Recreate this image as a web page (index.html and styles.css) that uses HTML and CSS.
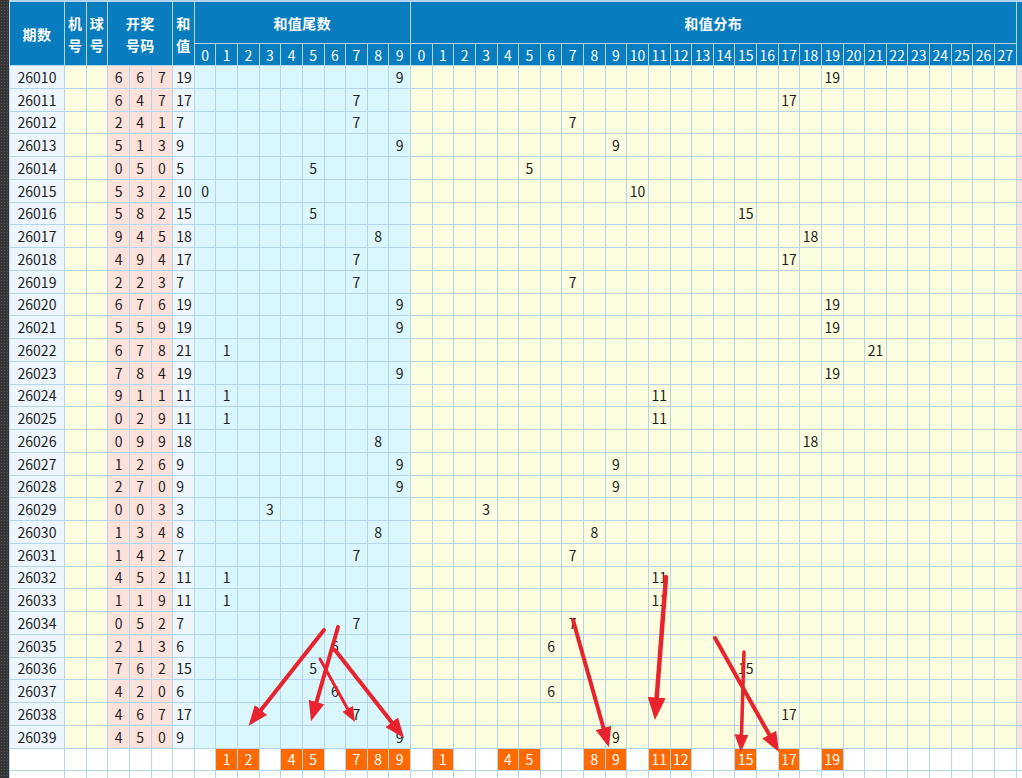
FILE: index.html
```html
<!DOCTYPE html>
<html lang="zh">
<head>
<meta charset="utf-8">
<title>和值走势</title>
<link rel="stylesheet" href="styles.css">
</head>
<body>
<div class="page">
  <div class="strip"></div>
  <div class="view">
    <div class="board" id="board">
      <div class="hd">
        <span class="h rs2">期数</span>
        <span class="h rs2 tall">机<br>号</span>
        <span class="h rs2 tall">球<br>号</span>
        <span class="h rs2 cs3 tall">开奖<br>号码</span>
        <span class="h rs2 tall">和<br>值</span>
        <span class="h cs10">和值尾数</span>
        <span class="h cs28">和值分布</span>
        <span class="h rs2"></span>
        <span class="n">0</span><span class="n">1</span><span class="n">2</span><span class="n">3</span><span class="n">4</span><span class="n">5</span><span class="n">6</span><span class="n">7</span><span class="n">8</span><span class="n">9</span>
        <span class="n">0</span><span class="n">1</span><span class="n">2</span><span class="n">3</span><span class="n">4</span><span class="n">5</span><span class="n">6</span><span class="n">7</span><span class="n">8</span><span class="n">9</span><span class="n">10</span><span class="n">11</span><span class="n">12</span><span class="n">13</span><span class="n">14</span><span class="n">15</span><span class="n">16</span><span class="n">17</span><span class="n">18</span><span class="n">19</span><span class="n">20</span><span class="n">21</span><span class="n">22</span><span class="n">23</span><span class="n">24</span><span class="n">25</span><span class="n">26</span><span class="n">27</span>
      </div>
    </div>
  </div>
  <svg class="arrows" width="1022" height="778" viewBox="0 0 1022 778" xmlns="http://www.w3.org/2000/svg">
    <defs>
      <marker id="ah" markerWidth="5" markerHeight="4" refX="0" refY="2" orient="auto" markerUnits="strokeWidth">
        <path d="M0,0 L5,2 L0,4 z" fill="#e8232d"/>
      </marker>
    </defs>
    <g stroke="#e8232d" stroke-linecap="round" fill="none" marker-end="url(#ah)">
      <line x1="324" y1="630" x2="261" y2="710" stroke-width="4"/>
      <line x1="338" y1="627" x2="316.5" y2="702" stroke-width="4"/>
      <line x1="320" y1="659" x2="347.7" y2="709" stroke-width="3"/>
      <line x1="335" y1="650" x2="391.7" y2="722.3" stroke-width="4"/>
      <line x1="573" y1="620" x2="603.5" y2="728" stroke-width="4"/>
      <line x1="666" y1="577" x2="656.7" y2="697.6" stroke-width="4.5"/>
      <line x1="715" y1="638" x2="769.2" y2="734.6" stroke-width="4"/>
      <line x1="744" y1="652" x2="741.5" y2="734.5" stroke-width="3.5"/>
    </g>
  </svg>
</div>
<script src="script.js"></script>
</body>
</html>
```

FILE: styles.css
```css
html, body {
  margin: 0;
  padding: 0;
  background: #ffffff;
}

body {
  font-family: "Noto Sans CJK SC", "Noto Sans", sans-serif;
  font-size: 14px;
  color: #1d1d1d;
  overflow: hidden;
}

.page {
  position: relative;
  display: flex;
  width: 1022px;
  height: 778px;
  overflow: hidden;
}

.strip {
  flex: 0 0 9px;
  background:
    radial-gradient(circle, #5b5b5b 0.7px, transparent 0.9px) 0 0 / 3px 3px,
    #353535;
}

.view {
  flex: 1 1 auto;
  overflow: hidden;
}

.board {
  display: grid;
  width: max-content;
  grid-template-columns: 54px repeat(44, 20.64px) 60px;
  grid-template-rows: 41px 21px;
  grid-auto-rows: 21.75px;
  gap: 1px;
  padding: 2px 1px 1px 1px;
  background: #b3d6ec;
}

.hd, .r {
  display: contents;
}

.h, .n {
  background: #077dc0;
  color: #ffffff;
  display: flex;
  align-items: center;
  justify-content: center;
  text-align: center;
}

.h {
  font-weight: 700;
  font-size: 14px;
  letter-spacing: 0.5px;
}

.h.tall {
  line-height: 22px;
  padding-top: 1px;
}

.n {
  font-size: 14px;
}

.rs2 { grid-row: span 2; }
.cs3 { grid-column: span 3; }
.cs10 { grid-column: span 10; }
.cs28 { grid-column: span 28; }

.r > i {
  font-style: normal;
  display: flex;
  align-items: center;
  justify-content: center;
  background: #fdfde0;
  line-height: 1;
  white-space: nowrap;
}

.r > i:nth-child(1) { background: #eef6fd; }
.r > i:nth-child(2),
.r > i:nth-child(3) { background: #fdfde0; }
.r > i:nth-child(n+4):nth-child(-n+6) { background: #fde2dc; }
.r > i:nth-child(7) { background: #eef6fd; justify-content: flex-start; padding-left: 3px; }
.r > i:nth-child(n+8):nth-child(-n+17) { background: #d9f7fd; }
.r > i:nth-child(n+18):nth-child(-n+45) { background: #fdfde0; }
.r > i:nth-child(46) { background: #fde2dc; }

.r.sum > i,
.r.sum > i:nth-child(n) { background: #ffffff; }

.r.sum > i.o {
  background: #ff6a00;
  color: #ffffff;
}

.arrows {
  position: absolute;
  top: 0;
  left: 0;
  pointer-events: none;
}
```

FILE: script.js
```js
(function () {
  var data = [
    ["26010", 6, 6, 7], ["26011", 6, 4, 7], ["26012", 2, 4, 1], ["26013", 5, 1, 3],
    ["26014", 0, 5, 0], ["26015", 5, 3, 2], ["26016", 5, 8, 2], ["26017", 9, 4, 5],
    ["26018", 4, 9, 4], ["26019", 2, 2, 3], ["26020", 6, 7, 6], ["26021", 5, 5, 9],
    ["26022", 6, 7, 8], ["26023", 7, 8, 4], ["26024", 9, 1, 1], ["26025", 0, 2, 9],
    ["26026", 0, 9, 9], ["26027", 1, 2, 6], ["26028", 2, 7, 0], ["26029", 0, 0, 3],
    ["26030", 1, 3, 4], ["26031", 1, 4, 2], ["26032", 4, 5, 2], ["26033", 1, 1, 9],
    ["26034", 0, 5, 2], ["26035", 2, 1, 3], ["26036", 7, 6, 2], ["26037", 4, 2, 0],
    ["26038", 4, 6, 7], ["26039", 4, 5, 0]
  ];
  var board = document.getElementById("board");

  function cell(row, text, cls) {
    var i = document.createElement("i");
    if (text !== undefined && text !== null && text !== "") i.textContent = String(text);
    if (cls) i.className = cls;
    row.appendChild(i);
  }

  data.forEach(function (d) {
    var r = document.createElement("div");
    r.className = "r";
    var s = d[1] + d[2] + d[3];
    var t = s % 10;
    cell(r, d[0]);
    cell(r);
    cell(r);
    cell(r, d[1]);
    cell(r, d[2]);
    cell(r, d[3]);
    cell(r, s);
    for (var k = 0; k < 10; k++) cell(r, k === t ? k : "");
    for (var m = 0; m < 28; m++) cell(r, m === s ? m : "");
    cell(r);
    board.appendChild(r);
  });

  var tails = [1, 2, 4, 5, 7, 8, 9];
  var sums = [1, 4, 5, 8, 9, 11, 12, 15, 17, 19];

  var sr = document.createElement("div");
  sr.className = "r sum";
  for (var a = 0; a < 7; a++) cell(sr);
  for (var b = 0; b < 10; b++) {
    if (tails.indexOf(b) >= 0) cell(sr, b, "o"); else cell(sr);
  }
  for (var c = 0; c < 28; c++) {
    if (sums.indexOf(c) >= 0) cell(sr, c, "o"); else cell(sr);
  }
  cell(sr);
  board.appendChild(sr);

  var er = document.createElement("div");
  er.className = "r sum";
  for (var e = 0; e < 46; e++) cell(er);
  board.appendChild(er);
})();
```
